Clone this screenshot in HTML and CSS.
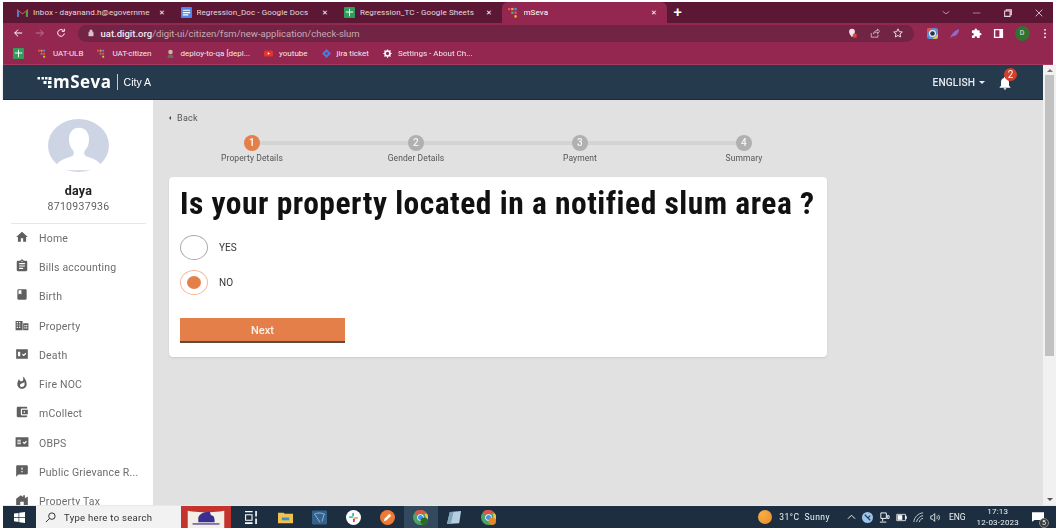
FILE: index.html
```html
<!DOCTYPE html>
<html lang="en">
<head>
<meta charset="utf-8">
<title>mSeva</title>
<link rel="stylesheet" href="styles.css">
</head>
<body>
<div class="window">
  <div class="tabstrip">
    <div class="tab"><svg class="fav" viewBox="0 0 16 12"><path d="M0 12V1l8 6 8-6v11h-3V5L8 9 3 5v7z" fill="#d8503f"/><path d="M13 12V4l3-3v11z" fill="#3fa35a"/><path d="M0 12V1l3 3v8z" fill="#4a7ee0"/></svg><span class="tab-title">Inbox - dayanand.h@egovernme</span><span class="tab-x">✕</span></div>
    <div class="tab"><svg class="fav" viewBox="0 0 12 12"><rect width="12" height="12" rx="1" fill="#4e86ea"/><path d="M2 3h8v1.200H2zM2 5.500h8v1.200H2zM2 8h6v1.200H2z" fill="#fff"/></svg><span class="tab-title">Regression_Doc - Google Docs</span><span class="tab-x">✕</span></div>
    <div class="tab"><svg class="fav" viewBox="0 0 12 12"><rect width="12" height="12" rx="1" fill="#2f9e5b"/><path d="M2 5h3.500V2h1v3H10v1H6.500v4h-1V6H2z" fill="#fff"/></svg><span class="tab-title">Regression_TC - Google Sheets</span><span class="tab-x">✕</span></div>
    <div class="tab tab-active"><svg class="fav" viewBox="0 0 12 12"><use href="#digit"/></svg><span class="tab-title">mSeva</span><span class="tab-x">✕</span></div>
    <span class="newtab">+</span>
    <div class="winctl">
      <svg viewBox="0 0 12 12"><path d="M2 4l4 3 4-3" fill="none" stroke="#c9a8b6"/></svg>
      <svg viewBox="0 0 12 12"><path d="M1 6h9" stroke="#d08aa3"/></svg>
      <svg viewBox="0 0 12 12"><path d="M2 3.500h6.500V10H2zM4 3.500V2h6v6H8.500" fill="none" stroke="#e6d5dc" stroke-width="1.300"/></svg>
      <svg viewBox="0 0 12 12"><path d="M2 2l8 8M10 2l-8 8" stroke="#e6d5dc"/></svg>
    </div>
  </div>
  <div class="toolbar">
    <svg class="nav" viewBox="0 0 12 12"><path d="M11 6H2M6 2L2 6l4 4" fill="none" stroke="#fff" stroke-width="1.200"/></svg>
    <svg class="nav" viewBox="0 0 12 12"><path d="M1 6h9M6 2l4 4-4 4" fill="none" stroke="#b9798f" stroke-width="1.200"/></svg>
    <svg class="nav" viewBox="0 0 12 12"><path d="M10 6.500A4 4 0 1 1 8.800 3M10 1v3H7" fill="none" stroke="#fff" stroke-width="1.200"/></svg>
    <div class="omnibox">
      <svg class="lock" viewBox="0 0 8 10"><path d="M1 4h6v5H1zM2.300 4V2.500a1.700 1.700 0 0 1 3.400 0V4" fill="#d9c3cd" stroke="#d9c3cd" stroke-width=".6" fill-rule="evenodd"/></svg>
      <span class="url"><b>uat.digit.org</b>/digit-ui/citizen/fsm/new-application/check-slum</span>
      <span class="omni-icons">
        <svg viewBox="0 0 12 12"><path d="M6 1a3.500 3.500 0 0 0-3.500 3.500C2.500 7 6 11 6 11s3.500-4 3.500-6.500A3.500 3.500 0 0 0 6 1z" fill="#f0e4e9"/><rect x="7" y="7" width="4.500" height="4.500" fill="#d9483b"/></svg>
        <svg viewBox="0 0 12 12"><path d="M1.500 6v5h8V8M4 7c.5-2.500 2.500-4 5-4V1l2.500 3L9 7V5C7 5 5.500 5.500 4 7z" fill="none" stroke="#d8bfca"/></svg>
        <svg viewBox="0 0 12 12"><path d="M6 1l1.500 3.400 3.700.4-2.800 2.400.8 3.600L6 9l-3.200 1.800.8-3.600L.8 4.800l3.700-.4z" fill="none" stroke="#f2e8ec" stroke-width="1.100"/></svg>
      </span>
    </div>
    <div class="extensions">
      <svg viewBox="0 0 12 12"><rect width="12" height="12" rx="2.500" fill="#5a8fdc"/><path d="M0 6V2.500A2.500 2.500 0 0 1 2.500 0H6z" fill="#e0524a"/><path d="M12 6v3.500A2.500 2.500 0 0 1 9.500 12H6z" fill="#e6c04a"/><circle cx="6" cy="6" r="3.800" fill="#f2f2f2"/><circle cx="6" cy="6" r="2.500" fill="#26324a"/></svg>
      <svg viewBox="0 0 12 12"><path d="M1 11C3 6 7 2 11 1c0 4-3 8-7 8z" fill="#8e6bc9"/></svg>
      <svg viewBox="0 0 24 24"><path d="M20.500 11H19V7a2 2 0 0 0-2-2h-4V3.500a2.500 2.500 0 0 0-5 0V5H4a2 2 0 0 0-2 2v3.800h1.500a2.700 2.700 0 0 1 0 5.400H2V20a2 2 0 0 0 2 2h3.800v-1.500a2.700 2.700 0 0 1 5.400 0V22H17a2 2 0 0 0 2-2v-4h1.500a2.500 2.500 0 0 0 0-5z" fill="#fff"/></svg>
      <svg viewBox="0 0 12 12"><path d="M1 1h10v10H1zM2.500 2.500v7H7v-7z" fill="#fff" fill-rule="evenodd"/></svg>
      <span class="profile">D</span>
      <svg class="dots" viewBox="0 0 4 12"><circle cx="2" cy="2" r="1" fill="#fff"/><circle cx="2" cy="6" r="1" fill="#fff"/><circle cx="2" cy="10" r="1" fill="#fff"/></svg>
    </div>
  </div>
  <div class="bookmarks">
    <svg class="fav" viewBox="0 0 12 12"><rect width="12" height="12" rx="1" fill="#2f9e5b"/><path d="M2 5h3.500V2h1v3H10v1H6.500v4h-1V6H2z" fill="#fff"/></svg>
    <span class="bm"><svg class="fav" viewBox="0 0 12 12"><use href="#digit"/></svg>UAT-ULB</span>
    <span class="bm"><svg class="fav" viewBox="0 0 12 12"><use href="#digit"/></svg>UAT-citizen</span>
    <span class="bm"><svg class="fav" viewBox="0 0 12 12"><circle cx="6" cy="4" r="3" fill="#c9b9a3"/><path d="M2 12c0-4 2-5 4-5s4 1 4 5z" fill="#6f6a60"/></svg>deploy-to-qa [depl...</span>
    <span class="bm"><svg class="fav" viewBox="0 0 12 12"><rect y="2" width="12" height="8" rx="2" fill="#e8332a"/><path d="M5 4.200L8 6 5 7.800z" fill="#fff"/></svg>youtube</span>
    <span class="bm"><svg class="fav" viewBox="0 0 12 12"><path d="M6 0l6 6-6 6-6-6z" fill="#3f7fe8"/><path d="M6 4l2 2-2 2-2-2z" fill="#93274f"/></svg>jira ticket</span>
    <span class="bm"><svg class="fav" viewBox="0 0 12 12"><circle cx="6" cy="6" r="3.300" fill="none" stroke="#fff" stroke-width="2.200"/><path d="M6 .5v2M6 9.500v2M.5 6h2M9.500 6h2M2 2l1.500 1.500M8.500 8.500L10 10M10 2L8.500 3.500M3.500 8.500L2 10" stroke="#fff" stroke-width="1.500"/></svg>Settings - About Ch...</span>
  </div>
  <div class="viewport">
    <div class="page">
      <header class="appbar">
        <div class="brand">
          <svg class="logo-mark" viewBox="0 0 14 11"><g fill="#fff"><rect x="0" y="0" width="2.500" height="2.500"/><rect x="4" y="0" width="2.500" height="2.500"/><rect x="7.500" y="0" width="2.500" height="2.500"/><rect x="11" y="0" width="3" height="3"/><rect x="6" y="4" width="3" height="3"/><rect x="10.500" y="4" width="3.500" height="3"/><rect x="10.500" y="8.500" width="3.500" height="2.500"/></g></svg>
          <span class="wordmark">mSeva</span>
          <span class="city">City A</span>
        </div>
        <div class="appbar-right">
          <span class="lang">ENGLISH<i class="caret"></i></span>
          <span class="bell"><svg viewBox="0 0 24 24"><path fill="#fff" d="M12 22c1.100 0 2-.9 2-2h-4c0 1.100.89 2 2 2zm6-6v-5c0-3.070-1.640-5.640-4.500-6.320V4c0-.83-.67-1.500-1.500-1.500s-1.500.67-1.500 1.500v.68C7.630 5.360 6 7.920 6 11v5l-2 2v1h16v-1l-2-2z"/></svg><em class="badge">2</em></span>
        </div>
      </header>
      <div class="content">
        <aside class="sidebar">
          <div class="profile-box">
            <div class="avatar"><svg viewBox="0 0 61 61" preserveAspectRatio="none"><circle cx="30.500" cy="30.500" r="30.500" fill="#cdd4e4"/><path d="M8 54c3-8 13-9 17-12 1-2 1-4 0-6-3-3-4-8-4-13 0-8 4-13 10-13s10 5 10 13c0 5-1 10-4 13-1 2-1 4 0 6 4 3 14 4 16 12-5 5-13 5-22 5s-18 0-23-5z" fill="#fff"/></svg></div>
            <div class="uname">daya</div>
            <div class="uphone">8710937936</div>
          </div>
          <nav class="menu">
            <a><svg viewBox="0 0 24 24"><path d="M10 20v-6h4v6h5v-8h3L12 3 2 12h3v8z"/></svg>Home</a>
            <a><svg viewBox="0 0 24 24"><path d="M19 3h-4.180C14.400 1.840 13.300 1 12 1c-1.300 0-2.400.84-2.820 2H5c-1.100 0-2 .9-2 2v14c0 1.100.9 2 2 2h14c1.100 0 2-.9 2-2V5c0-1.100-.9-2-2-2zm-7 0c.55 0 1 .45 1 1s-.45 1-1 1-1-.45-1-1 .45-1 1-1zm2 14H7v-2h7v2zm3-4H7v-2h10v2zm0-4H7V7h10v2z"/></svg>Bills accounting</a>
            <a><svg viewBox="0 0 24 24"><path d="M18 2H6c-1.100 0-2 .9-2 2v14c0 1.100.9 2 2 2h12c1.100 0 2-.9 2-2V4c0-1.100-.9-2-2-2zM6 4h5v7l-2.500-1.500L6 11V4z" fill-rule="evenodd"/></svg>Birth</a>
            <a><svg viewBox="0 0 24 24"><path d="M1 5h12v16H1zM3 7v2h2V7zm4 0v2h2V7zM3 11v2h2v-2zm4 0v2h2v-2zM3 15v2h2v-2zm4 0v2h2v-2zM14 9h9v12h-9zm2 3v2h2v-2zm3 0v2h2v-2zm-3 4v2h2v-2zm3 0v2h2v-2z" fill-rule="evenodd"/></svg>Property</a>
            <a><svg viewBox="0 0 24 24"><path d="M2 4h20v16H2zM5 8v8h4V8zm7 5l1.500-1.500 1.500 1.500 3-3 1.500 1.500L15 16z" fill-rule="evenodd"/></svg>Death</a>
            <a><svg viewBox="0 0 24 24"><path d="M13.500.67s.74 2.650.74 4.800c0 2.060-1.350 3.730-3.410 3.730-2.070 0-3.630-1.670-3.630-3.730l.03-.36C5.210 7.510 4 10.620 4 14c0 4.420 3.580 8 8 8s8-3.580 8-8C20 8.610 17.410 3.800 13.500.67zM11.710 19c-1.780 0-3.220-1.400-3.220-3.140 0-1.620 1.050-2.760 2.810-3.120 1.770-.36 3.600-1.210 4.620-2.580.39 1.290.59 2.650.59 4.040 0 2.650-2.150 4.800-4.800 4.800z"/></svg>Fire NOC</a>
            <a><svg viewBox="0 0 24 24"><path d="M21 18v1c0 1.100-.9 2-2 2H5c-1.110 0-2-.9-2-2V5c0-1.100.89-2 2-2h14c1.100 0 2 .9 2 2v1h-9c-1.110 0-2 .9-2 2v8c0 1.100.89 2 2 2h9zm-9-2h10V8H12v8zm4-2.500c-.83 0-1.500-.67-1.500-1.500s.67-1.500 1.500-1.500 1.500.67 1.500 1.500-.67 1.500-1.500 1.500z"/></svg>mCollect</a>
            <a><svg viewBox="0 0 24 24"><path d="M1 4h22v16H1zM4 8v2h6V8zm0 3v2h6v-2zm0 3v2h6v-2zm9-1l1.500-1.500 1.500 1.500 3-3 1.500 1.500L16 16z" fill-rule="evenodd"/></svg>OBPS</a>
            <a><svg viewBox="0 0 24 24"><path d="M20 2H4c-1.100 0-1.990.9-1.990 2L2 22l4-4h14c1.100 0 2-.9 2-2V4c0-1.100-.9-2-2-2zm-7 12h-2v-2h2v2zm0-4h-2V6h2v4z"/></svg>Public Grievance R...</a>
            <a><svg viewBox="0 0 24 24"><path d="M2 22V10l8-6 4 3V4h3v5l5-3v16h-7v-7h-6v7z"/></svg>Property Tax</a>
          </nav>
        </aside>
        <main class="main">
          <div class="back"><i class="back-caret"></i>Back</div>
          <ol class="stepper">
            <li class="step step-on"><span class="dot">1</span>Property Details</li>
            <li class="step"><span class="dot">2</span>Gender Details</li>
            <li class="step"><span class="dot">3</span>Payment</li>
            <li class="step"><span class="dot">4</span>Summary</li>
          </ol>
          <section class="card">
            <h1>Is your property located in a notified slum area ?</h1>
            <div class="option"><span class="radio"></span>YES</div>
            <div class="option"><span class="radio radio-on"></span>NO</div>
            <button class="next">Next</button>
          </section>
        </main>
      </div>
    </div>
    <div class="scrollbar"><i class="arrow-up"></i><span class="thumb"></span><i class="arrow-down"></i></div>
  </div>
  <footer class="taskbar">
    <span class="start"><svg viewBox="0 0 12 12"><path fill="#fff" d="M0 1.700L5 1v4.500H0zM5.700.9L12 0v5.500H5.700zM0 6.200h5v4.600L0 10.200zM5.700 6.200H12V12l-6.300-.9z"/></svg></span>
    <span class="search"><svg viewBox="0 0 12 12"><circle cx="7.500" cy="4.500" r="3.500" fill="none" stroke="#222"/><path d="M5 7l-4 4" stroke="#222"/></svg>Type here to search</span>
    <span class="piano"><svg viewBox="0 0 52 23" preserveAspectRatio="none"><rect width="52" height="23" fill="#f3efe6"/><path d="M0 0h7v23H0zM45 0h7v23h-7zM0 0h52v3C40 8 12 8 0 3z" fill="#c5332f"/><path d="M18 12c2-5 8-6 12-6 1 2 0 3 2 4 3 0 3 5 3 7H18z" fill="#3a2f8f"/><rect x="12" y="18" width="28" height="1.500" fill="#5a4ea0"/></svg></span>
    <span class="tb-icons">
      <span class="tb"><svg viewBox="0 0 14 12"><path d="M1 0h7v1H1zM1 10.500h7V12H1zM1 3h7v6H1zM2 4v4h5V4zM10.500 0h1.500v5h-1.500zM10.500 7h1.500v5h-1.500z" fill="#fff" fill-rule="evenodd"/></svg></span>
      <span class="tb"><svg viewBox="0 0 16 12"><path d="M0 1h6l1 1h9v10H0z" fill="#f0c24c"/><rect x="4" y="6" width="8" height="3" fill="#3d8ed8"/></svg></span>
      <span class="tb"><svg viewBox="0 0 15 14"><rect width="15" height="14" rx="1" fill="#33618c"/><path d="M2 4c3-2 7-2 11 0M3 4l5 8M12 4l-2 7" fill="none" stroke="#a9c6de" stroke-width=".8"/></svg></span>
      <span class="tb"><svg viewBox="0 0 16 16"><circle cx="8" cy="8" r="8" fill="#fff"/><rect x="3" y="6.700" width="4.500" height="1.800" rx=".9" fill="#36c5f0"/><rect x="6.700" y="3" width="1.800" height="4" rx=".9" fill="#2eb67d"/><rect x="8.500" y="7.500" width="4.500" height="1.800" rx=".9" fill="#ecb22e"/><rect x="7.500" y="9" width="1.800" height="4" rx=".9" fill="#e01e5a"/></svg></span>
      <span class="tb"><svg viewBox="0 0 16 16"><circle cx="8" cy="8" r="8" fill="#ee7a33"/><path d="M4 12l1-3 5-5 2 2-5 5z" fill="#fff"/></svg></span>
      <span class="tb tb-active"><svg viewBox="0 0 16 16"><use href="#chrome"/><circle cx="12" cy="12" r="4" fill="#2c6a2c"/></svg></span>
      <span class="tb"><svg viewBox="0 0 16 14"><path d="M3 1l12-1-2 13-13 1z" fill="#b5cfe0"/><path d="M3 1l4 0-3 13H0z" fill="#7fa4bc"/></svg></span>
      <span class="tb"><svg viewBox="0 0 16 16"><use href="#chrome"/><circle cx="12" cy="12" r="4" fill="#e08a2e"/></svg></span>
    </span>
    <span class="tray">
      <i class="sun"></i>
      <span class="weather">31°C&nbsp; Sunny</span>
      <svg class="tr-chev" viewBox="0 0 10 6"><path d="M1 5l4-4 4 4" fill="none" stroke="#fff"/></svg>
      <svg class="tr" viewBox="0 0 12 12"><circle cx="6" cy="6" r="6" fill="#9cc4ea"/><path d="M3 3l6 6M9 4L6 7" stroke="#1f3a56" stroke-width="1.300"/></svg>
      <svg class="tr" viewBox="0 0 12 12"><path d="M2 1h6v6H2zM4 7v3M1 11h7M9 4h2v3H9z" fill="none" stroke="#fff"/></svg>
      <svg class="tr" viewBox="0 0 14 10"><path d="M1 1h11v8H1zM12 3.500h1.500v3H12z" fill="none" stroke="#fff"/><rect x="2" y="2" width="6" height="6" fill="#fff"/></svg>
      <svg class="tr" viewBox="0 0 12 12"><path d="M1 11c0-5 5-10 10-10M4 11c0-3 4-7 7-7M7 11c0-2 2-4 4-4" fill="none" stroke="#cfd6dd"/></svg>
      <svg class="tr" viewBox="0 0 14 12"><path d="M1 4h2l3-3v10L3 8H1zM8.500 4c1 1 1 3 0 4M10.500 2.500c2 2 2 5 0 7" fill="none" stroke="#fff"/></svg>
      <span class="eng">ENG</span>
      <span class="clock"><span>17:13</span><span>12-03-2023</span></span>
      <span class="notif"><svg viewBox="0 0 14 11"><path d="M0 0h14v9H3L0 11z" fill="#fff"/></svg><em>5</em></span>
    </span>
  </footer>
</div>
<svg class="defs" aria-hidden="true">
  <symbol id="digit" viewBox="0 0 12 12"><rect x="0" y="1" width="2.500" height="2.500" fill="#e8583f"/><rect x="3.500" y="1" width="2.500" height="2.500" fill="#f0a53c"/><rect x="7" y="1" width="2.500" height="2.500" fill="#3f9be8"/><rect x="3.500" y="5" width="2.500" height="2.500" fill="#48b36b"/><rect x="7" y="5" width="2.500" height="2.500" fill="#e8583f"/><rect x="7" y="9" width="2.500" height="2.500" fill="#f0c03c"/></symbol>
  <symbol id="chrome" viewBox="0 0 16 16"><circle cx="8" cy="8" r="8" fill="#4aa564"/><path d="M8 0a8 8 0 0 1 7 4H8a4 4 0 0 0-3.500 2L2 2a8 8 0 0 1 6-2z" fill="#e0524a"/><path d="M15 4a8 8 0 0 1-5 11.700L12 10a4 4 0 0 0 0-6z" fill="#f0c64a"/><circle cx="8" cy="8" r="3.500" fill="#fff"/><circle cx="8" cy="8" r="2.700" fill="#4c8df0"/></symbol>
</svg>
</body>
</html>
```
FILE: styles.css
```css
* { box-sizing: border-box; }
html, body { margin: 0; height: 100%; overflow: hidden; background: #fff; }
body { font-family: Roboto, "Liberation Sans", sans-serif; }
.defs { display: none; }
.window { display: flex; flex-direction: column; width: 1056px; height: 528px; padding: 2px 0 0 3px; overflow: hidden; filter: blur(.3px); }

.tabstrip { display: flex; align-items: center; height: 21px; flex: none; background: #5c1734; padding-left: 8px; margin-right: 3px; }
.tab { display: flex; align-items: center; width: 163.500px; height: 21px; padding: 0 9px 0 6px; font-size: 8px; color: #e9d8df; border-right: 1px solid transparent; }
.tab-active { background: #93274f; border-radius: 6px 6px 0 0; width: 165px; color: #fff; }
.tab-title { flex: 1; white-space: nowrap; overflow: hidden; margin-left: 5px; letter-spacing: .1px; }
.tab-x { font-size: 7px; color: #fff; }
.fav { width: 11px; height: 11px; flex: none; }
.newtab { color: #fff; font-size: 15px; font-weight: 500; margin-left: 7px; line-height: 1; }
.winctl { display: flex; gap: 21px; margin-left: auto; padding-right: 9px; }
.winctl svg { width: 10px; height: 10px; }

.toolbar { display: flex; align-items: center; height: 20px; flex: none; background: #93274f; padding: 0 8px 0 10px; gap: 11.500px; margin-right: 3px; }
.nav { width: 10px; height: 10px; flex: none; }
.omnibox { display: flex; align-items: center; flex: none; width: 836px; height: 17px; padding: 0 5px 0 10px; background: #722444; border-radius: 9px; }
.lock { width: 6px; height: 8px; margin-right: 7px; }
.url { font-size: 9.500px; color: #c9aab7; white-space: nowrap; }
.url b { font-weight: 500; color: #f3e8ed; }
.omni-icons { display: flex; gap: 13px; margin-left: auto; padding-right: 6px; }
.omni-icons svg { width: 10px; height: 10px; }
.extensions { display: flex; align-items: center; gap: 11px; margin-left: 1.500px; }
.extensions svg { width: 11px; height: 11px; }
.extensions .dots { width: 4px; margin-left: 2px; }
.profile { width: 15px; height: 15px; border-radius: 50%; background: #34702e; color: #e8f1e6; font-size: 7px; display: flex; align-items: center; justify-content: center; }

.bookmarks { display: flex; align-items: center; height: 22px; flex: none; background: #93274f; border-bottom: 1px solid #a83a62; padding-left: 10px; gap: 14px; font-size: 8px; color: #f3e8ed; margin-right: 3px; }
.bm { display: flex; align-items: center; gap: 6px; white-space: nowrap; }
.bm .fav { width: 9px; height: 9px; }

.viewport { display: flex; flex: 1; min-height: 0; }
.page { flex: 1; display: flex; flex-direction: column; min-width: 0; }
.appbar { display: flex; align-items: center; justify-content: space-between; height: 35px; flex: none; background: #263a4d; border-bottom: 1px solid #1c2b39; box-shadow: 0 1px 2px rgba(0,0,0,.2); }
.brand { display: flex; align-items: center; padding-left: 34px; color: #fff; }
.logo-mark { width: 15px; height: 11px; margin-right: 1px; }
.wordmark { font-size: 17px; font-weight: 700; letter-spacing: .5px; font-family: "Open Sans", sans-serif; padding-right: 5px; border-right: 1px solid #c5ccd3; line-height: 16px; }
.city { font-size: 10.500px; padding-left: 6px; font-family: "Liberation Sans", sans-serif; }
.appbar-right { display: flex; align-items: center; padding-right: 30px; }
.lang { font-size: 10.200px; font-weight: 500; color: #e7ecf1; letter-spacing: .1px; margin-right: 12px; display: flex; align-items: center; }
.caret { display: inline-block; border: 3px solid transparent; border-top-color: #e7ecf1; border-bottom: 0; margin-left: 4px; }
.bell { position: relative; display: block; width: 16px; height: 16px; margin-top: 1px; }
.bell svg { width: 16px; height: 16px; display: block; }
.badge { position: absolute; right: -4px; top: -7px; width: 13px; height: 13px; border-radius: 50%; background: #d0402c; color: #fff; font-size: 10px; font-style: normal; line-height: 13px; text-align: center; }

.content { display: flex; flex: 1; min-height: 0; background: #e1e1e1; }
.sidebar { width: 150px; flex: none; background: #fff; overflow: hidden; }
.profile-box { display: flex; flex-direction: column; align-items: center; padding: 19px 0 8px; margin: 0 7px 0 8px; border-bottom: 1px solid #e4e6ea; }
.avatar { width: 61px; height: 53px; }
.avatar svg { width: 61px; height: 53px; display: block; }
.uname { font-size: 12.500px; font-weight: 700; color: #222; letter-spacing: .3px; margin-top: 9.500px; line-height: 17px; }
.uphone { font-size: 10.500px; color: #5f5f5f; letter-spacing: .3px; line-height: 16px; }
.menu { display: flex; flex-direction: column; }
.menu a { display: flex; align-items: center; gap: 10px; height: 29.300px; padding-left: 12px; font-size: 10.500px; color: #6d6d6d; letter-spacing: .2px; white-space: nowrap; flex: none; }
.menu svg { width: 14px; height: 14px; fill: #5f5f5f; flex: none; margin-bottom: 3px; }

.main { flex: 1; min-width: 0; padding: 12px 0 0 16px; }
.back { font-size: 9px; color: #555; line-height: 12px; letter-spacing: .3px; display: flex; align-items: center; }
.back-caret { border: 2.500px solid transparent; border-right-color: #444; border-left: 0; margin-right: 6px; }
.stepper { display: grid; grid-template-columns: repeat(4, 164px); margin: 11px 0 0; padding: 0 0 0 1px; list-style: none; }
.step { position: relative; display: flex; flex-direction: column; align-items: center; font-size: 8.500px; color: #555; gap: 2px; line-height: 10px; letter-spacing: .1px; }
.step:not(:last-child)::after { content: ""; position: absolute; left: 50%; top: 6px; width: 100%; height: 4px; background: #d4d4d4; }
.dot { position: relative; z-index: 1; width: 16px; height: 16px; border-radius: 50%; background: #b0b0b0; color: #f4f4f4; font-size: 10px; font-weight: 500; line-height: 16px; text-align: center; }
.step-on .dot { background: #e57f4a; color: #fff; }
.card { width: 658px; height: 180px; margin-top: 14px; padding: 11px 11px 0; background: #fff; border-radius: 4px; box-shadow: 0 1px 2px rgba(0,0,0,.1); }
h1 { margin: 0 0 15px; font-size: 31.500px; line-height: 32px; font-weight: 700; color: #111; font-stretch: 75%; letter-spacing: .5px; white-space: nowrap; }
.option { display: flex; align-items: center; gap: 11px; height: 25px; margin-bottom: 9.500px; font-size: 10px; color: #333; }
.radio { position: relative; width: 28px; height: 25px; border: 1px solid #aaa; border-radius: 50%; }
.radio-on { border-color: #f3b899; }
.radio-on::after { content: ""; position: absolute; left: 6px; top: 5px; width: 14px; height: 13px; border-radius: 50%; background: #e57f4a; }
.next { display: block; width: 165px; height: 25px; margin-top: 23px; padding-top: 4px; border: 0; border-bottom: 2px solid #5f4a3e; background: #e57f4a; color: #fbf1eb; font: 500 11px Roboto, sans-serif; }

.scrollbar { display: flex; flex-direction: column; align-items: center; width: 13px; flex: none; background: #f1f1f1; padding: 4px 0; }
.thumb { flex: none; width: 9px; height: 281px; background: #c1c1c1; margin: 3px 0; }
.arrow-up, .arrow-down { border: 3px solid transparent; border-top: 0; border-bottom-color: #777; }
.arrow-down { border-bottom: 0; border-top: 3px solid #555; margin-top: auto; }

.taskbar { display: flex; align-items: center; height: 23px; flex: none; background: #1c2e40; border-top: 1px solid #e8e8e8; color: #eef2f5; }
.start { display: flex; align-items: center; justify-content: center; width: 33px; height: 100%; }
.start svg { width: 11px; height: 11px; }
.search { display: flex; align-items: center; gap: 8px; width: 145px; height: 100%; padding-left: 9px; background: #f2f2f2; color: #333; font-size: 9.500px; letter-spacing: .3px; white-space: nowrap; }
.search svg { width: 11px; height: 11px; flex: none; }
.piano { width: 50px; height: 100%; flex: none; background: #f3efe6; }
.piano svg { width: 100%; height: 100%; display: block; }
.tb-icons { display: flex; height: 100%; margin-left: 4px; }
.tb { display: flex; align-items: center; justify-content: center; width: 33.800px; height: 100%; }
.tb svg { width: 15px; height: 15px; }
.tb-active { background: #33495e; }
.tray { display: flex; align-items: center; height: 100%; margin-left: auto; padding-right: 12px; font-size: 8.500px; }
.sun { width: 14px; height: 14px; border-radius: 50%; background: radial-gradient(circle at 30% 30%, #f6b045, #ea8a2c); margin-right: 7px; }
.weather { letter-spacing: .45px; margin-right: 17px; white-space: nowrap; }
.tr-chev { width: 9px; height: 6px; margin-right: 6px; }
.tr { width: 11px; height: 11px; margin-right: 6px; }
.eng { margin: 0 11px 0 2px; }
.clock { display: flex; flex-direction: column; align-items: center; line-height: 11px; font-size: 8px; letter-spacing: .2px; margin-right: 13px; }
.notif { position: relative; display: block; width: 12px; height: 10px; }
.notif svg { width: 12px; height: 10px; display: block; }
.notif em { position: absolute; right: -5px; bottom: -6px; width: 10px; height: 10px; border-radius: 50%; background: #3a3a3a; border: 1px solid #888; color: #fff; font-size: 7px; font-style: normal; line-height: 8px; text-align: center; }
```
